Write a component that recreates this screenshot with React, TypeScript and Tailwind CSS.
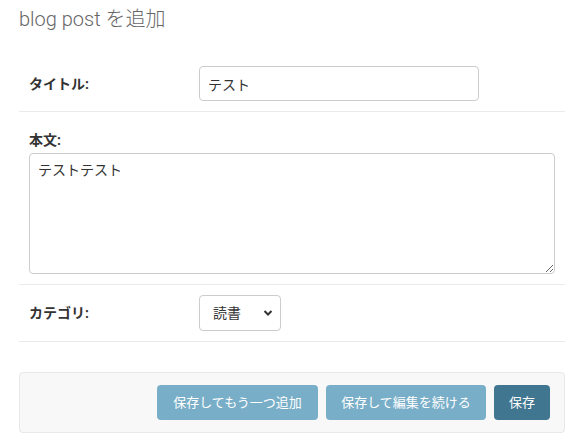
// Django admin style "add blog post" form

export default function App() {
  return (
    <div className="min-h-[442px] bg-white pl-[19px] pr-[11px] pt-[7px] font-['Roboto','Noto_Sans_CJK_JP',sans-serif] text-[#333]">
      {/* Title */}
      <h1 className="text-[20px] leading-6 font-light text-[#666]">blog post を追加</h1>

      {/* Fieldset */}
      <div className="mt-[25px]">
        {/* Title row */}
        <div className="flex items-center border-b border-[#eaeaea] p-[10px]">
          <label className="w-[170px] shrink-0 text-[14px] leading-5 font-bold">タイトル:</label>
          <input
            type="text"
            defaultValue="テスト"
            className="h-[35px] w-[280px] rounded-[4px] border border-[#ccc] px-[8px] text-[14px] leading-5 text-[#333] outline-none"
          />
        </div>

        {/* Body row */}
        <div className="border-b border-[#eaeaea] p-[10px]">
          <label className="block pt-[8px] text-[14px] leading-5 font-bold">本文:</label>
          <textarea
            defaultValue="テストテスト"
            className="mt-[3px] block h-[121px] w-full rounded-[4px] border border-[#ccc] px-[8px] py-[6px] text-[14px] leading-5 text-[#333] outline-none"
          />
        </div>

        {/* Category row */}
        <div className="flex items-center border-b border-[#eaeaea] p-[10px]">
          <label className="w-[170px] shrink-0 text-[14px] leading-5 font-bold">カテゴリ:</label>
          <div className="relative">
            <select className="h-[36px] w-[82px] appearance-none rounded-[4px] border border-[#ccc] bg-white pl-[13px] text-[14px] leading-5 text-[#333] outline-none">
              <option>読書</option>
            </select>
            <svg
              className="pointer-events-none absolute right-[8px] top-[14px]"
              width="10"
              height="8"
              viewBox="0 0 10 8"
              fill="none"
            >
              <path d="M1.5 2l3.5 3.5L8.5 2" stroke="#333" strokeWidth="2" />
            </svg>
          </div>
        </div>
      </div>

      {/* Submit row */}
      <div className="mt-[30px] flex justify-end gap-[8px] rounded-[4px] border border-[#e8e8e8] bg-[#f8f8f8] px-[14px] py-[12px]">
        <button className="h-[35px] w-[161px] rounded-[4px] bg-[#79aec8] text-[13px] text-white">
          保存してもう一つ追加
        </button>
        <button className="h-[35px] w-[160px] rounded-[4px] bg-[#79aec8] text-[13px] text-white">
          保存して編集を続ける
        </button>
        <button className="h-[35px] w-[56px] rounded-[4px] bg-[#417690] text-[13px] text-white">
          保存
        </button>
      </div>
    </div>
  );
}
